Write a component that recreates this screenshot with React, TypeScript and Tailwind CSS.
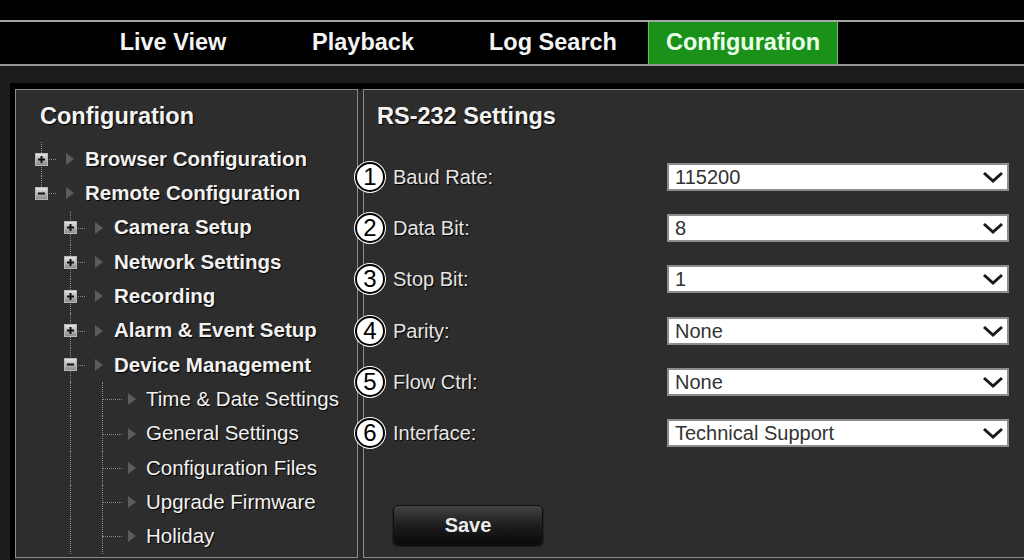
import React from 'react';

const TABS = ['Live View', 'Playback', 'Log Search', 'Configuration'];

type TreeItem = {
  label: string;
  level: 1 | 2 | 3;
  toggle?: '+' | '-';
  lineTop?: boolean;
  lineBottom?: boolean;
};

const TREE: TreeItem[] = [
  { label: 'Browser Configuration', level: 1, toggle: '+', lineTop: true, lineBottom: true },
  { label: 'Remote Configuration', level: 1, toggle: '-', lineTop: true },
  { label: 'Camera Setup', level: 2, toggle: '+', lineTop: true, lineBottom: true },
  { label: 'Network Settings', level: 2, toggle: '+', lineTop: true, lineBottom: true },
  { label: 'Recording', level: 2, toggle: '+', lineTop: true, lineBottom: true },
  { label: 'Alarm & Event Setup', level: 2, toggle: '+', lineTop: true, lineBottom: true },
  { label: 'Device Management', level: 2, toggle: '-', lineTop: true, lineBottom: true },
  { label: 'Time & Date Settings', level: 3 },
  { label: 'General Settings', level: 3 },
  { label: 'Configuration Files', level: 3 },
  { label: 'Upgrade Firmware', level: 3 },
  { label: 'Holiday', level: 3 },
];

const FIELDS = [
  { n: '1', label: 'Baud Rate:', value: '115200' },
  { n: '2', label: 'Data Bit:', value: '8' },
  { n: '3', label: 'Stop Bit:', value: '1' },
  { n: '4', label: 'Parity:', value: 'None' },
  { n: '5', label: 'Flow Ctrl:', value: 'None' },
  { n: '6', label: 'Interface:', value: 'Technical Support' },
];

function ToggleBox({ sign }: { sign: '+' | '-' }) {
  return (
    <div className="relative w-[13px] h-[13px] border border-[#b8b8b8] bg-gradient-to-b from-[#e4e4e4] to-[#8c8c8c] flex items-center justify-center">
      <svg width="9" height="9" viewBox="0 0 9 9">
        <path d="M1 4.5 H8" stroke="#111" strokeWidth="2" />
        {sign === '+' && <path d="M4.5 1 V8" stroke="#111" strokeWidth="2" />}
      </svg>
    </div>
  );
}

function Arrow() {
  return (
    <svg width="8" height="12" viewBox="0 0 8 12" className="shrink-0">
      <path d="M0 0 L8 6 L0 12 Z" fill="#5c5c5c" />
    </svg>
  );
}

function TreeRow({ item }: { item: TreeItem }) {
  const text = item.level === 3 ? 'font-normal ml-[10px]' : 'font-bold ml-[11px]';

  return (
    <div className="flex items-center h-[34.3px]">
      {item.level === 1 && <div className="w-[10px]" />}
      {item.level === 2 && <div className="w-[39px]" />}
      {item.level === 3 && <div className="w-[9px]" />}

      {item.level < 3 ? (
        <div className="relative w-[30px] h-full flex items-center justify-center">
          {item.lineTop && (
            <div className="absolute left-[15px] top-0 h-1/2 border-l border-dotted border-[#8a8a8a]" />
          )}
          {item.lineBottom && (
            <div className="absolute left-[15px] top-1/2 h-1/2 border-l border-dotted border-[#8a8a8a]" />
          )}
          <div className="absolute left-[15px] right-0 top-1/2 border-t border-dotted border-[#8a8a8a]" />
          {item.toggle && <ToggleBox sign={item.toggle} />}
        </div>
      ) : (
        <>
          <div className="w-[30px]" />
          <div className="relative w-[30px] h-full">
            <div className="absolute left-[15px] inset-y-0 border-l border-dotted border-[#8a8a8a]" />
          </div>
          <div className="relative w-[37px] h-full">
            <div className="absolute left-[17px] inset-y-0 border-l border-dotted border-[#8a8a8a]" />
            <div className="absolute left-[17px] right-0 top-1/2 border-t border-dotted border-[#8a8a8a]" />
          </div>
        </>
      )}

      <div className={item.level === 3 ? 'ml-[6px]' : 'ml-[10px]'}>
        <Arrow />
      </div>
      <span
        className={`${text} text-[20.5px] leading-none text-[#f2f2f2] whitespace-nowrap [text-shadow:1px_1px_1px_#000]`}
      >
        {item.label}
      </span>
    </div>
  );
}

function SelectBox({ value }: { value: string }) {
  return (
    <div className="w-[342px] h-[28px] bg-white border-2 border-[#8c8c8c] flex items-center justify-between pl-[6px] pr-[3px]">
      <span className="text-[20px] leading-none text-[#333]">{value}</span>
      <svg width="22" height="14" viewBox="0 0 22 14">
        <path d="M2 3 L11 11 L20 3" fill="none" stroke="#1a1a1a" strokeWidth="3" />
      </svg>
    </div>
  );
}

export default function App() {
  return (
    <div className="w-[1024px] h-[560px] overflow-hidden bg-black font-['Liberation_Sans',Arial,sans-serif] flex flex-col">
      {/* Top nav */}
      <div className="h-[20px] shrink-0 bg-black" />
      <div className="h-[2px] shrink-0 bg-[#a6a6a6]" />
      <div className="h-[42px] shrink-0 bg-black flex pl-[78px]">
        {TABS.map((t) => {
          const active = t === 'Configuration';
          return (
            <div
              key={t}
              className={`w-[190px] h-full flex items-center justify-center text-[23.5px] font-bold leading-none ${
                active
                  ? 'bg-[#1a921a] border-x border-[#5fbf5f] text-[#eaffea]'
                  : 'text-[#f4f4f4]'
              }`}
            >
              {t}
            </div>
          );
        })}
      </div>
      <div className="h-[2px] shrink-0 bg-[#949494]" />

      {/* Body */}
      <div className="flex-1 bg-[#1c1c1c] pt-[17px] pl-[10px] flex flex-col">
        <div className="flex-1 bg-black pt-[6px] pl-[5px] flex flex-col">
          <div className="flex-1 flex gap-[5px] bg-[#292929]">
            {/* Left tree panel */}
            <div className="w-[343px] h-[469px] shrink-0 border border-[#8a8a8a] bg-[#2d2d2d] pt-[12px]">
              <div className="pl-[24px] text-[23.5px] leading-[28px] font-bold text-[#f4f4f4] [text-shadow:1px_1px_1px_#000]">
                Configuration
              </div>
              <div className="mt-[12px]">
                {TREE.map((item) => (
                  <TreeRow key={item.label} item={item} />
                ))}
              </div>
            </div>

            {/* Right settings panel */}
            <div className="flex-1 h-[469px] border-y border-l border-[#8a8a8a] bg-[#2d2d2d] pt-[12px] pl-[13px]">
              <div className="text-[23.5px] leading-[28px] font-bold text-[#f4f4f4] [text-shadow:1px_1px_1px_#000]">
                RS-232 Settings
              </div>
              <div className="mt-[21.4px]">
                {FIELDS.map((f) => (
                  <div key={f.n} className="flex items-center h-[51.2px]">
                    <div className="-ml-[22px] w-[30px] h-[30px] shrink-0 rounded-full bg-white border-2 border-black shadow-[0_0_0_1px_#fff] flex items-center justify-center text-[24px] leading-none text-black">
                      {f.n}
                    </div>
                    <div className="ml-[8px] w-[274px] text-[20px] leading-none text-[#e6e6e6] [text-shadow:1px_1px_1px_#000]">
                      {f.label}
                    </div>
                    <SelectBox value={f.value} />
                  </div>
                ))}
              </div>
              <button className="mt-[46px] ml-[16px] w-[150px] h-[40px] rounded-[5px] border border-[#111] bg-gradient-to-b from-[#434343] via-[#1e1e1e] to-[#0a0a0a] text-[20px] font-bold text-[#ececec] shadow-[0_1px_2px_#000]">
                Save
              </button>
            </div>
          </div>
        </div>
      </div>
    </div>
  );
}
